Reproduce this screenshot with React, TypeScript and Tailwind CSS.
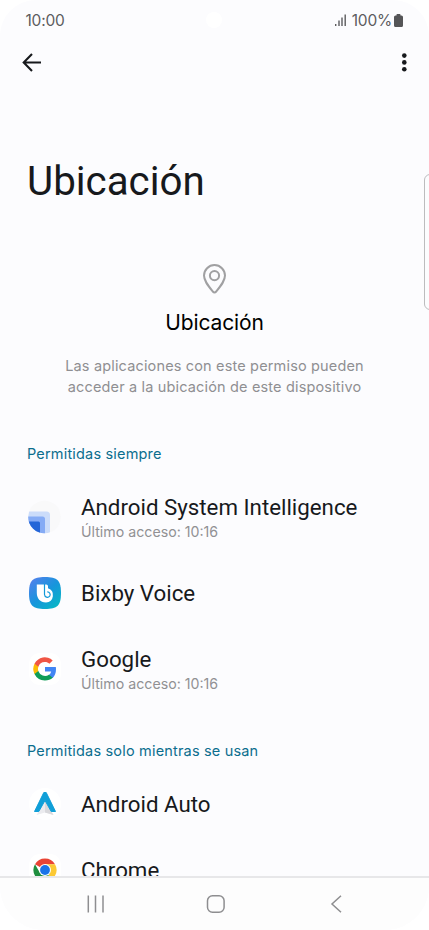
import { ReactNode } from "react";

type AppEntry = {
  name: string;
  lastAccess?: string;
  icon: ReactNode;
};

const alwaysAllowed: AppEntry[] = [
  { name: "Android System Intelligence", lastAccess: "10:16", icon: <IntelligenceIcon /> },
  { name: "Bixby Voice", icon: <BixbyIcon /> },
  { name: "Google", lastAccess: "10:16", icon: <GoogleIcon /> },
];

const allowedInUse: AppEntry[] = [
  { name: "Android Auto", icon: <AutoIcon /> },
  { name: "Chrome", icon: <ChromeIcon /> },
];

export default function App() {
  return (
    <div className="bg-white">
      <div className="relative flex h-[930px] w-[429px] flex-col overflow-hidden rounded-t-[36px] rounded-b-[44px] bg-[#fcfcfe] font-['Roboto',sans-serif] text-[#17191c]">
        <StatusBar />
        <div className="flex h-[44px] shrink-0 items-center justify-between pl-[21px] pr-[19px]">
          <button aria-label="Atrás">
            <svg width="21" height="20" viewBox="0 0 21 20" fill="none" stroke="#17191c" strokeWidth="2.1">
              <path d="M20 10.500H2.500M11 2 2.700 10.500l8.300 8.500" />
            </svg>
          </button>
          <button aria-label="Más opciones">
            <svg width="12" height="20" viewBox="0 0 12 20" fill="#17191c">
              <circle cx="6.300" cy="3.600" r="2.300" />
              <circle cx="6.300" cy="10.400" r="2.300" />
              <circle cx="6.300" cy="17.200" r="2.300" />
            </svg>
          </button>
        </div>

        <main className="min-h-0 flex-1 overflow-hidden">
          <h1 className="mt-[74px] pl-[27px] text-[40.300px] leading-[48px]">Ubicación</h1>

          <div className="mt-[57px] flex flex-col items-center">
            <svg width="26" height="32" viewBox="0 0 26 32" fill="none" stroke="#a0a0a2" strokeWidth="2">
              <path d="M12.500 29.500c-.7 0-1.200-.4-1.700-1C6 22.600 2 17.800 2 12.600a10.500 10.500 0 0 1 21 0c0 5.200-4 10-8.800 15.900-.5.6-1 1-1.700 1Z" />
              <circle cx="12.500" cy="12.600" r="4.600" />
            </svg>
            <h2 className="mt-[14px] font-['Inter',sans-serif] text-[21px] leading-7 tracking-[-0.1px] text-black">Ubicación</h2>
            <p className="mt-[18px] text-center font-['Inter',sans-serif] text-[14.500px] leading-[21px] tracking-[0.16px] text-[#8f8f92]">
              Las aplicaciones con este permiso pueden
              <br />
              acceder a la ubicación de este dispositivo
            </p>
          </div>

          <SectionTitle className="mt-[47px]">Permitidas siempre</SectionTitle>
          <div className="mt-[10px]">
            {alwaysAllowed.map((app) => (
              <AppRow key={app.name} app={app} />
            ))}
          </div>

          <SectionTitle className="mt-[29px]">Permitidas solo mientras se usan</SectionTitle>
          <div className="mt-[10px]">
            {allowedInUse.map((app) => (
              <AppRow key={app.name} app={app} />
            ))}
          </div>
        </main>

        <NavBar />

        {/* Edge panel handle */}
        <div className="absolute left-[424px] top-[174px] h-[136px] w-[12px] rounded-[6px] border-[1.500px] border-[#bcbcbe] bg-[#fcfcfe]" />
      </div>
    </div>
  );
}

function StatusBar() {
  return (
    <header className="relative flex h-[40px] shrink-0 items-center justify-between pl-[25.500px] pr-[26px] pt-px font-['Inter',sans-serif] text-[15.500px] tracking-[-0.2px] text-[#5c5c5e]">
      <span>10:00</span>
      <div className="absolute left-[206px] top-[12px] size-[16px] rounded-full bg-white" />
      <div className="flex items-center">
        <svg className="mr-[5px]" width="12" height="13" viewBox="0 0 12 13" fill="#5c5c5e">
          <rect x="0" y="10" width="1.400" height="2" />
          <rect x="3.300" y="6.500" width="1.400" height="5.500" />
          <rect x="6.300" y="3.500" width="1.400" height="8.500" />
          <rect x="9.500" y="0.500" width="1.400" height="11.500" />
        </svg>
        <span>100%</span>
        <svg className="ml-[2px] mt-[-1px]" width="9" height="13" viewBox="0 0 9 13" fill="#555557">
          <path d="M2.500.8A.8.8 0 0 1 3.300 0h2.400a.8.8 0 0 1 .8.8v.7h1A1.500 1.500 0 0 1 9 3v8.500A1.500 1.500 0 0 1 7.500 13h-6A1.500 1.500 0 0 1 0 11.500V3a1.500 1.500 0 0 1 1.500-1.500h1Z" />
        </svg>
      </div>
    </header>
  );
}

function SectionTitle({ children, className }: { children: ReactNode; className: string }) {
  return (
    <h3 className={`${className} pl-[27px] font-['Inter',sans-serif] text-[14.500px] leading-5 tracking-[0.18px] text-[#0b6e8e]`}>
      {children}
    </h3>
  );
}

function AppRow({ app }: { app: AppEntry }) {
  return (
    <div className={`flex items-center pl-[28px] ${app.lastAccess ? "h-[86px]" : "h-[66px]"}`}>
      <div className="size-[34px] shrink-0">{app.icon}</div>
      <div className="ml-[19px]">
        <p className="text-[22.300px] leading-[28px]">{app.name}</p>
        {app.lastAccess && (
          <p className="mt-px font-['Inter',sans-serif] text-[14.200px] leading-[20px] text-[#919194]">
            Último acceso: {app.lastAccess}
          </p>
        )}
      </div>
    </div>
  );
}

function NavBar() {
  return (
    <nav className="flex h-[54px] shrink-0 items-center border-t-2 border-[#e7e7e9] bg-[#fdfdfd] pl-[86px]">
      <svg width="18" height="18" viewBox="0 0 18 18" stroke="#8e8e90" strokeWidth="1.500">
        <path d="M2.300 .5v17M9.500.5v17M17 .5v17" />
      </svg>
      <svg className="ml-[102px]" width="20" height="20" viewBox="0 0 20 20" fill="none" stroke="#8e8e90" strokeWidth="1.500">
        <rect x="1.500" y="1.700" width="16.600" height="16.600" rx="5" />
      </svg>
      <svg className="ml-[104px]" width="12" height="18" viewBox="0 0 12 18" fill="none" stroke="#8e8e90" strokeWidth="1.500">
        <path d="M11 .7 2 9l9 8.300" />
      </svg>
    </nav>
  );
}

function IntelligenceIcon() {
  return (
    <svg viewBox="0 0 34 34">
      <clipPath id="intelligence">
        <circle cx="16.500" cy="17" r="16.300" />
      </clipPath>
      <circle cx="16.500" cy="17" r="16.300" fill="#f9f9fa" />
      <g clipPath="url(#intelligence)">
        <path d="M0 11.500h18.500a3.500 3.500 0 0 1 3.500 3.500V34H0Z" fill="#cbdcfa" />
        <path d="M0 16.500h14.500a2.500 2.500 0 0 1 2.500 2.500V34H0Z" fill="#85abf5" />
        <path d="M0 21.500h10.500a1.500 1.500 0 0 1 1.500 1.500V34H0Z" fill="#2466d8" />
      </g>
    </svg>
  );
}

function BixbyIcon() {
  return (
    <svg viewBox="0 0 34 34">
      <defs>
        <linearGradient id="bixby" x1="0.1" y1="0.1" x2="0.85" y2="0.95">
          <stop offset="0" stopColor="#4d82ea" />
          <stop offset="0.5" stopColor="#1795dc" />
          <stop offset="1" stopColor="#08b5c6" />
        </linearGradient>
      </defs>
      <path d="M17 1c12.500 0 16 3.500 16 16s-3.500 16-16 16S1 29.500 1 17 4.500 1 17 1Z" fill="url(#bixby)" />
      <path d="M8.800 8.500h9.400a1.800 1.800 0 0 1 1.800 1.800v2a7.300 7.300 0 0 1-2 14.200c-6 0-9.200-4.500-9.200-9.500Z" fill="white" />
      <path d="M16.500 8v10.500a2.900 2.900 0 0 0 5.200 1.600 2.700 2.700 0 0 0-2.400-4.200" fill="none" stroke="#1299d8" strokeWidth="1.200" />
    </svg>
  );
}

function GoogleIcon() {
  return (
    <svg viewBox="0 0 34 34">
      <rect x="1" y="1" width="32" height="32" rx="11" fill="white" />
      <g transform="translate(5 5)">
        <path fill="#4285f4" d="M23 12.250c0-.8-.07-1.550-.2-2.250H12v4.500h6.200a5.300 5.300 0 0 1-2.300 3.400v3h3.800c2.100-2 3.300-4.900 3.300-8.650Z" />
        <path fill="#0f9d58" d="M12 23.500c3.100 0 5.700-1 7.700-2.800l-3.800-2.900a7.100 7.100 0 0 1-10.600-3.700H1.500v3A11.500 11.500 0 0 0 12 23.500Z" />
        <path fill="#fbbc05" d="M5.300 14.100a6.900 6.900 0 0 1 0-4.300v-3H1.500a11.500 11.500 0 0 0 0 10.300Z" />
        <path fill="#f05545" d="M12 5.100c1.700 0 3.200.6 4.400 1.700l3.300-3.300A11.500 11.500 0 0 0 1.500 6.800l3.800 3A6.900 6.900 0 0 1 12 5.100Z" />
      </g>
    </svg>
  );
}

function AutoIcon() {
  return (
    <svg viewBox="0 0 34 34">
      <circle cx="17" cy="17" r="16" fill="white" />
      <path d="M17 14 25.500 28 17 25.500 8.500 28Z" fill="#ececef" />
      <path d="M17 14 25.500 28 17 25.500Z" fill="#d9d9dc" />
      <path d="M15.800 5.500h2.400L27.500 24.500h-4.300L17 13.500 10.800 24.500H6.500Z" fill="#109fd8" stroke="#109fd8" strokeLinejoin="round" />
    </svg>
  );
}

function ChromeIcon() {
  return (
    <svg viewBox="0 0 34 34">
      <rect x="1" y="1" width="32" height="32" rx="11" fill="white" />
      <path d="M17 17 7 11.250A11.500 11.500 0 0 1 27 11.250L17 11.250Z" fill="#e94435" />
      <path d="M17 11.250h10A11.500 11.500 0 0 1 17 28.500l5-8.600Z" fill="#fcc934" />
      <path d="m12 19.900-5-8.650A11.500 11.500 0 0 0 17 28.500l5-8.600Z" fill="#1e8e3e" />
      <circle cx="17" cy="17" r="6" fill="white" />
      <circle cx="17" cy="17" r="4.900" fill="#1a73e8" />
    </svg>
  );
}
